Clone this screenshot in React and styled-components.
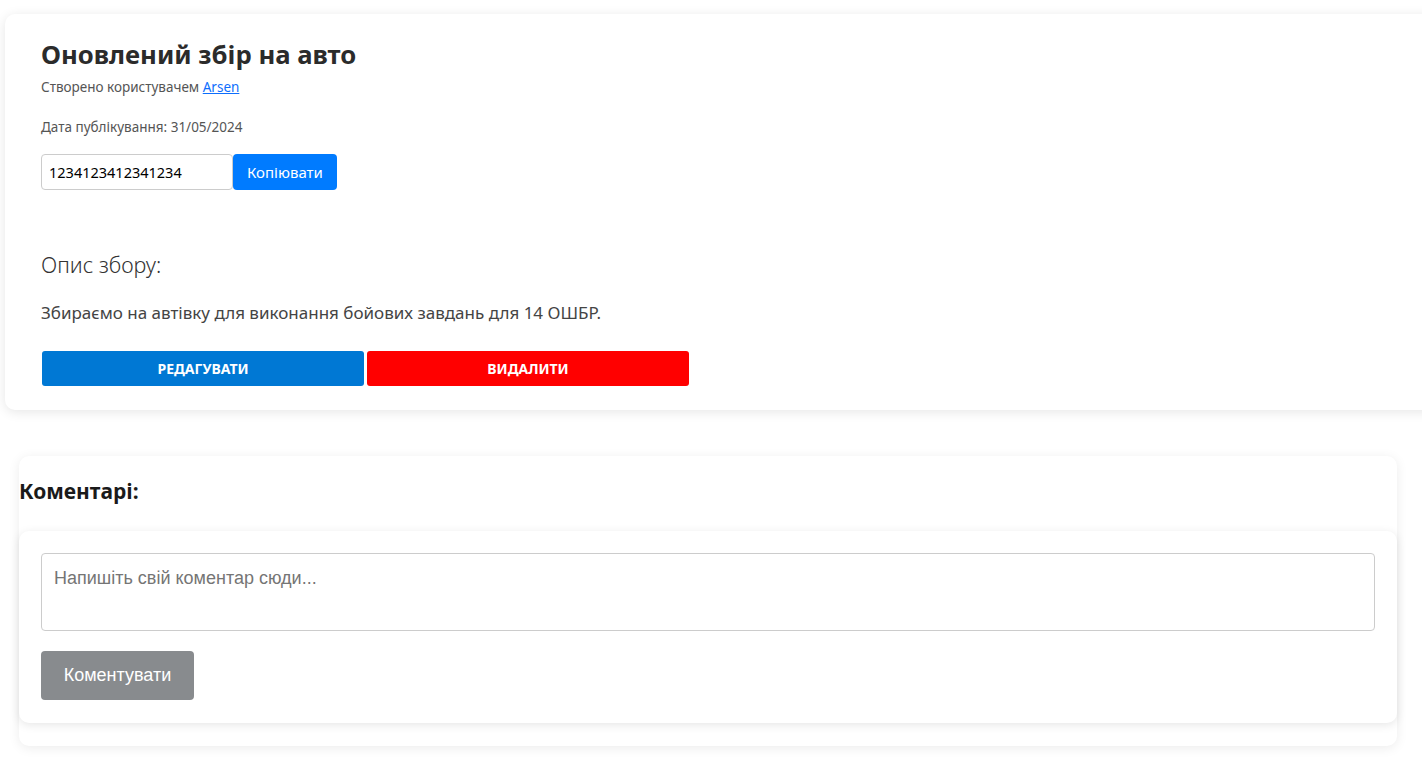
import React, { useState } from 'react';
import styled, { createGlobalStyle } from 'styled-components';

const GlobalStyle = createGlobalStyle`
  body {
    margin: 0;
    background: #fff;
    font-family: 'Noto Sans', 'Open Sans', sans-serif;
    overflow-x: hidden;
  }
`;

const Page = styled.div`
  padding: 14px 0 15px 5px;
  overflow: hidden;
`;

const DetailCard = styled.div`
  margin-right: -30px;
  background: #fff;
  border-radius: 10px;
  box-shadow: 0 2px 12px rgba(0, 0, 0, 0.1);
  padding: 25px 36px 24px;
`;

const Title = styled.h1`
  margin: 0 0 7px;
  font-size: 25.7px;
  font-weight: 700;
  color: #2b2b2b;
  line-height: 32px;
`;

const Meta = styled.p`
  margin: 0 0 ${props => props.gap || 0}px;
  font-size: 13.5px;
  color: #555;
  line-height: 18px;

  a {
    color: #0d6efd;
  }
`;

const CopyRow = styled.div`
  display: flex;
  margin-top: 18px;
`;

const CardInput = styled.input`
  box-sizing: border-box;
  width: 192px;
  height: 36px;
  padding: 0 7px;
  border: 1px solid #ccc;
  border-radius: 4px;
  font-family: 'Noto Sans', sans-serif;
  font-size: 14.5px;
  color: #000;
`;

const CopyButton = styled.button`
  height: 36px;
  padding: 0 14px;
  background: #007bff;
  color: #fff;
  border: none;
  border-radius: 4px;
  font-family: 'Noto Sans', sans-serif;
  font-size: 15px;
  cursor: pointer;
`;

const SubTitle = styled.h2`
  margin: 61px 0 23px;
  font-size: 21.5px;
  font-weight: 300;
  color: #333;
  line-height: 28px;
`;

const Description = styled.p`
  margin: 0 0 27px;
  font-size: 17px;
  color: #444;
  line-height: 22px;
`;

const ActionRow = styled.div`
  display: flex;
  gap: 3px;
  padding-left: 1px;
`;

const ActionButton = styled.button`
  width: 322px;
  height: 35px;
  border: none;
  border-radius: 3px;
  background: ${props => (props.danger ? '#ff0000' : '#0078d4')};
  color: #fff;
  font-family: 'Noto Sans', sans-serif;
  font-size: 14px;
  font-weight: 700;
  text-transform: uppercase;
  cursor: pointer;
`;

const CommentsCard = styled.div`
  margin: 46px 25px 0 14px;
  background: #fff;
  border-radius: 10px;
  box-shadow: 0 2px 12px rgba(0, 0, 0, 0.08);
  padding-bottom: 23px;
`;

const CommentsHeading = styled.h3`
  margin: 0;
  padding: 20px 0 25px;
  font-size: 21px;
  font-weight: 700;
  color: #1a1a1a;
  line-height: 30px;
`;

const CommentForm = styled.div`
  display: flex;
  flex-direction: column;
  align-items: flex-start;
  gap: 20px;
  padding: 22px 22px 23px;
  border-radius: 10px;
  box-shadow: 0 2px 10px rgba(0, 0, 0, 0.1);
  background: #fff;
`;

const CommentArea = styled.textarea`
  box-sizing: border-box;
  width: 100%;
  height: 78px;
  padding: 14px 12px;
  border: 1px solid #ccc;
  border-radius: 4px;
  resize: none;
  font-family: 'Liberation Sans', Arial, sans-serif;
  font-size: 18px;

  &::placeholder {
    color: #757575;
  }
`;

const SubmitButton = styled.button`
  width: 153px;
  height: 49px;
  border: none;
  border-radius: 4px;
  background: #888b8e;
  color: #fff;
  font-family: 'Liberation Sans', Arial, sans-serif;
  font-size: 18px;
  cursor: pointer;
`;

const App = () => {
  const [comment, setComment] = useState('');

  return (
    <Page>
      <GlobalStyle />
      <DetailCard>
        <Title>Оновлений збір на авто</Title>
        <Meta gap={22}>
          Створено користувачем <a href="#">Arsen</a>
        </Meta>
        <Meta>Дата публікування: 31/05/2024</Meta>
        <CopyRow>
          <CardInput readOnly value="1234123412341234" />
          <CopyButton>Копіювати</CopyButton>
        </CopyRow>
        <SubTitle>Опис збору:</SubTitle>
        <Description>Збираємо на автівку для виконання бойових завдань для 14 ОШБР.</Description>
        <ActionRow>
          <ActionButton>Редагувати</ActionButton>
          <ActionButton danger>Видалити</ActionButton>
        </ActionRow>
      </DetailCard>

      <CommentsCard>
        <CommentsHeading>Коментарі:</CommentsHeading>
        <CommentForm>
          <CommentArea
            placeholder="Напишіть свій коментар сюди..."
            value={comment}
            onChange={e => setComment(e.target.value)}
          />
          <SubmitButton>Коментувати</SubmitButton>
        </CommentForm>
      </CommentsCard>
    </Page>
  );
};

export default App;
